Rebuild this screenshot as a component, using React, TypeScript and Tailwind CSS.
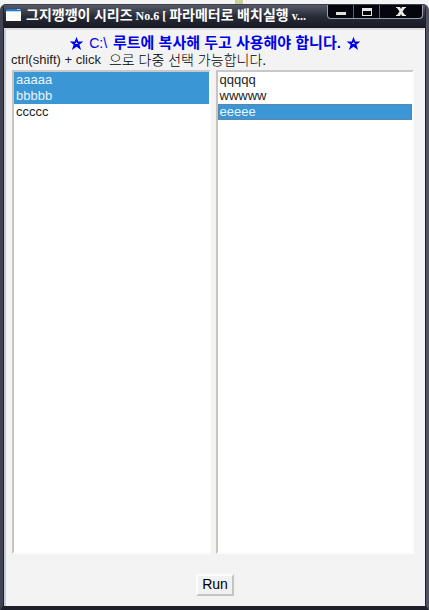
import React, { useState } from 'react';

interface ListBoxProps {
  label: string;
  items: string[];
  selected: string[];
  focused?: boolean;
  onChange: (values: string[]) => void;
}

const ListBox: React.FC<ListBoxProps> = ({ label, items, selected, focused, onChange }) => {
  return (
    <select
      multiple
      aria-label={label}
      value={selected}
      onChange={(e) => onChange(Array.from(e.target.selectedOptions, (o) => o.value))}
      className="list-box min-w-0 flex-1 appearance-none overflow-hidden rounded-none border-2 border-t-[#c8c8c8] border-l-[#c8c4c0] border-r-[#fcfcfc] border-b-[#fcfcfc] bg-white p-0 text-[13px] leading-4 text-[#222] outline-none"
    >
      {items.map((item) => (
        <option
          key={item}
          value={item}
          className={
            focused
              ? 'h-4 min-h-4 px-[2px] py-0 leading-4 checked:shadow-[inset_0_0_0_1px_#5c87a8]'
              : 'h-4 min-h-4 px-[2px] py-0 leading-4'
          }
        >
          {item}
        </option>
      ))}
    </select>
  );
};

const Star: React.FC = () => {
  return (
    <svg width="13" height="13" viewBox="0 0 13 13" className="shrink-0">
      <path
        d="M6.500 1.500L7.800 5h4L8.700 7.500l1.300 4-3.500-2.400L3 11.500l1.300-4L1.200 5h4z"
        fill="#0000e6"
        stroke="#0000e6"
        strokeWidth="1.200"
      />
      <path d="M6 5h1v1h1v1H5V6h1z" fill="#b9b9f2" />
    </svg>
  );
};

const TitleBar: React.FC = () => {
  return (
    <header className="flex h-6 items-start border-t border-[#3c3f4c] bg-gradient-to-b from-[#565a68] via-[#292c38] to-[#161922] pr-[2px] pl-[2px]">
      <svg width="15" height="12" viewBox="0 0 15 12" className="mt-1 mr-[5px] shrink-0">
        <rect width="15" height="12" fill="#fdfdf8" />
        <rect width="15" height="2" fill="#2479c9" />
        <rect y="2" width="15" height="1" fill="#b9d8ef" />
        <rect x="11" width="3" height="1" fill="#9dccf4" />
      </svg>
      <h1 className="min-w-0 flex-1 truncate pt-[2px] font-['Liberation_Serif','Noto_Sans_CJK_KR',serif] text-[12px] leading-[18px] font-bold text-white">
        <span className="text-[14px]">그지깽깽이 시리즈</span> No.6 [ <span className="text-[14px]">파라메터로 배치실행</span> v...
      </h1>
      <div className="flex h-[14px] shrink-0 overflow-hidden rounded-b border border-t-0 border-[#9a9eab] bg-[#05060d]">
        <button aria-label="Minimize" className="flex w-[26px] items-center justify-center border-r border-[#5d6170]">
          <svg width="12" height="12" viewBox="0 0 12 12">
            <rect x="1" y="6" width="10" height="3" fill="#e4e2de" />
          </svg>
        </button>
        <button aria-label="Maximize" className="flex w-[26px] items-center justify-center border-r border-[#5d6170]">
          <svg width="12" height="12" viewBox="0 0 12 12">
            <path d="M1 2h10v8H1zM2 5v4h8V5z" fill="#e8e7e3" fillRule="evenodd" />
          </svg>
        </button>
        <button aria-label="Close" className="flex w-[42px] items-center justify-center">
          <svg width="12" height="12" viewBox="0 0 12 12">
            <path d="M1 1h4l1 2 1-2h4v1h-1L7.500 5.500 10 9h1v1H7L6 8l-1 2H1V9h1l2.500-3.500L2 2H1z" fill="#ecebe7" />
          </svg>
        </button>
      </div>
    </header>
  );
};

export default function App() {
  const [left, setLeft] = useState<string[]>(['aaaaa', 'bbbbb']);
  const [right, setRight] = useState<string[]>(['eeeee']);

  return (
    <div className="flex min-h-screen flex-col bg-[#f4f4f4] font-['Liberation_Sans','Noto_Sans_CJK_KR',sans-serif]">
      {/* Strip of the desktop above the window */}
      <div className="flex h-1 justify-center pl-12">
        <div className="w-2 bg-[#cdcf9c]"></div>
      </div>

      <div className="flex flex-1 flex-col overflow-hidden rounded-t-md border-r-[3px] border-b-4 border-l-[3px] border-r-[#50535f] border-b-[#1d202b] border-l-[#424453] bg-[#1d202b] px-px">
        <TitleBar />

        <main className="flex flex-1 flex-col border-t-2 border-r border-l-2 border-t-[#dcdcdf] border-r-[#f0f3f9] border-l-[#c9cad6] bg-[#f3f3f3] px-[5px] pt-[5px]">
          <p className="mb-px flex items-center justify-center gap-[6px] text-[14px] leading-4 font-bold whitespace-nowrap text-[#0000e6]">
            <Star />
            <span className="font-normal">C:\</span>
            <span className="text-[15px]">루트에 복사해 두고 사용해야 합니다.</span>
            <Star />
          </p>
          <p className="mb-[2px] flex gap-2 text-[13px] leading-4 whitespace-nowrap text-[#222]">
            <span>ctrl(shift) + click</span>
            <span className="text-[14px] font-light text-black">으로 다중 선택 가능합니다.</span>
          </p>

          {/* Lists */}
          <div className="flex flex-1 gap-[5px] pr-[5px] pl-px">
            <ListBox label="왼쪽 목록" items={['aaaaa', 'bbbbb', 'ccccc']} selected={left} onChange={setLeft} />
            <ListBox label="오른쪽 목록" items={['qqqqq', 'wwwww', 'eeeee']} selected={right} focused onChange={setRight} />
          </div>

          {/* Footer */}
          <div className="flex justify-center pt-5 pb-[10px]">
            <button className="h-[22px] border-2 border-t-[#fcfcfc] border-l-[#fcfcfc] border-r-[#c4c4c4] border-b-[#c4c4c4] bg-[#f1f1f1] px-1 pb-[2px] text-[14px] leading-4 text-black">
              Run
            </button>
          </div>
        </main>
      </div>

      <style>{`
        .list-box option:checked {
          background: linear-gradient(#3a96d4, #3a96d4);
          -webkit-text-fill-color: #e8f4fc;
        }
      `}</style>
    </div>
  );
}
